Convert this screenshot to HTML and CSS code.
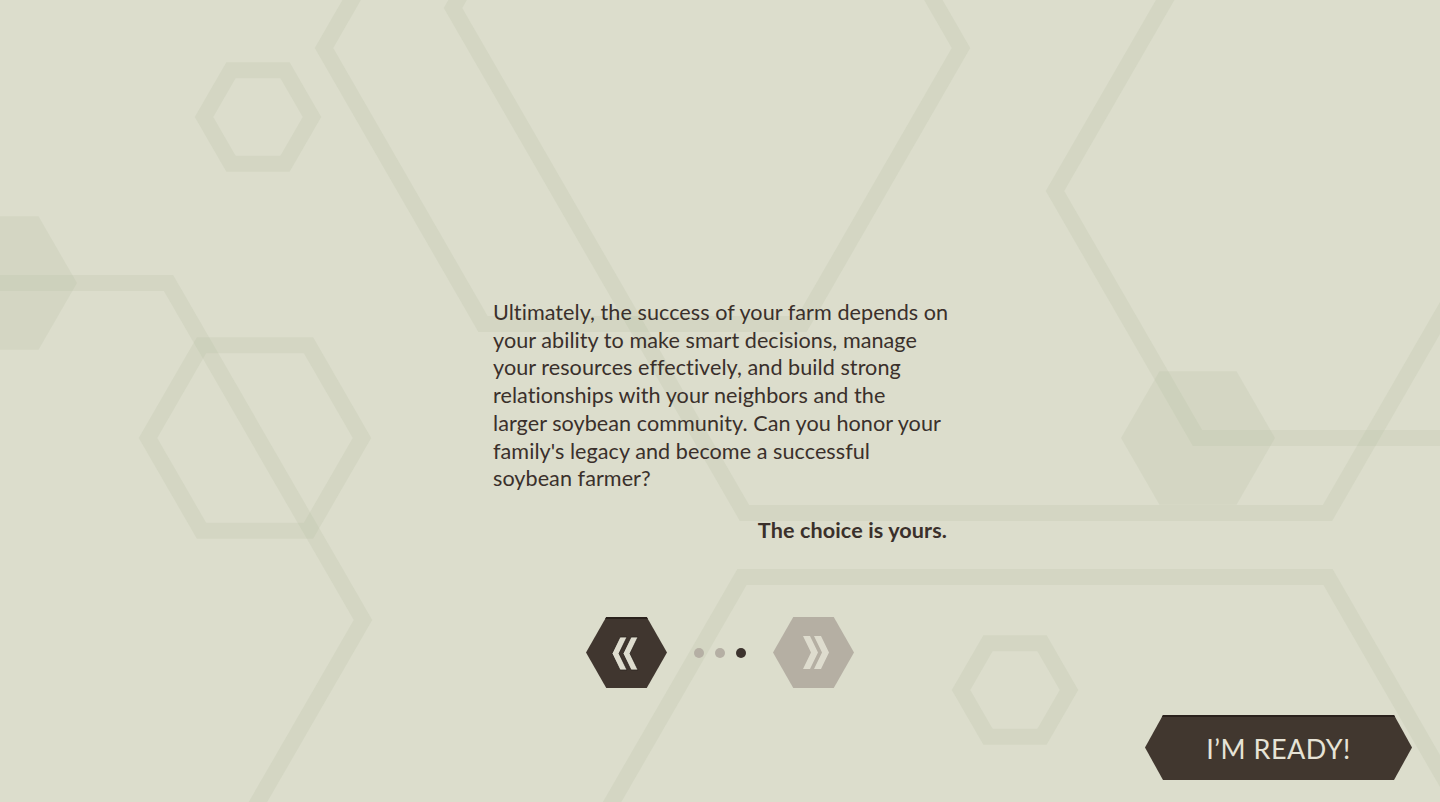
FILE: index.html
```html
<!DOCTYPE html>
<html lang="en">
<head>
<meta charset="utf-8">
<title>Intro</title>
<link rel="stylesheet" href="styles.css">
</head>
<body>
<svg class="backdrop" width="1440" height="802" viewBox="0 0 1440 802" aria-hidden="true">
  <g class="hex-line">
    <polygon points="204,117 231,70.2 285,70.2 312,117 285,163.8 231,163.8"/>
    <polygon points="-415,620 -220.5,283 168.5,283 363,620 168.5,957 -220.5,957"/>
    <polygon points="148,438 201.5,345.3 308.5,345.3 362,438 308.5,530.7 201.5,530.7"/>
    <polygon points="324,48 483,-228 802,-228 961,48 802,324 483,324"/>
    <polygon points="453,8 744.5,-497 1327.5,-497 1619,8 1327.5,513 744.5,513"/>
    <polygon points="449,1084.5 742,577 1328,577 1621,1084.5 1328,1592 742,1592"/>
    <polygon points="961,690 988,643.2 1042,643.2 1069,690 1042,736.8 988,736.8"/>
    <polygon points="1055,191 1197.5,-56 1482.5,-56 1625,191 1482.5,438 1197.5,438"/>
  </g>
  <g class="hex-fill">
    <polygon points="-77,283 -38.5,216.3 38.5,216.3 77,283 38.5,349.7 -38.5,349.7"/>
    <polygon points="1121,438 1159.5,371.3 1236.5,371.3 1275,438 1236.5,504.7 1159.5,504.7"/>
  </g>
</svg>

<main class="page">
  <section class="story">
    <p class="story-text">Ultimately, the success of your farm depends on<br>
    your ability to make smart decisions, manage<br>
    your resources effectively, and build strong<br>
    relationships with your neighbors and the<br>
    larger soybean community. Can you honor your<br>
    family's legacy and become a successful<br>
    soybean farmer?</p>
    <p class="story-kicker">The choice is yours.</p>
  </section>

  <nav class="pager" aria-label="Pages">
    <button class="hex-btn hex-btn--active" type="button" aria-label="Previous">
      <svg class="chevrons" width="28" height="35" viewBox="0 0 28 35">
        <path d="M9 1H16L8 17.5L16 34H9L1 17.5Z"/>
        <path d="M20 1H27L19 17.5L27 34H20L12 17.5Z"/>
      </svg>
    </button>
    <div class="dots">
      <span class="dot"></span>
      <span class="dot"></span>
      <span class="dot dot--current"></span>
    </div>
    <button class="hex-btn hex-btn--muted" type="button" aria-label="Next">
      <svg class="chevrons" width="28" height="35" viewBox="0 0 28 35">
        <path d="M1 1H8L16 17.5L8 34H1L9 17.5Z"/>
        <path d="M12 1H19L27 17.5L19 34H12L20 17.5Z"/>
      </svg>
    </button>
  </nav>

  <div class="actions">
    <button class="ready" type="button">I’M READY!</button>
  </div>
</main>
</body>
</html>
```

FILE: styles.css
```css
* { box-sizing: border-box; }

html, body {
  margin: 0;
  padding: 0;
}

body {
  width: 1440px;
  height: 802px;
  overflow: hidden;
  background: #dcddcc;
  position: relative;
  font-family: "Lato", "Noto Sans", sans-serif;
  color: #3a302b;
}

.backdrop {
  position: absolute;
  left: 0;
  top: 0;
}

.hex-line polygon {
  fill: none;
  stroke: rgba(180, 192, 160, 0.2);
  stroke-width: 16;
}

.hex-fill polygon {
  fill: rgba(180, 192, 160, 0.2);
}

.page {
  position: relative;
  height: 802px;
  display: flex;
  flex-direction: column;
  align-items: center;
}

.story {
  width: 454px;
  margin-top: 299px;
}

.story-text {
  margin: 0;
  font-size: 21.6px;
  line-height: 27.7px;
  letter-spacing: 0.05px;
  white-space: nowrap;
}

.story-kicker {
  margin: 23px 0 0;
  text-align: right;
  font-size: 21.6px;
  line-height: 28px;
  letter-spacing: 0.1px;
  font-weight: 700;
}

.pager {
  margin-top: 73px;
  display: flex;
  align-items: center;
  gap: 27px;
}

.hex-btn {
  width: 81px;
  height: 71px;
  border: 0;
  padding: 0;
  display: flex;
  align-items: center;
  justify-content: center;
  clip-path: polygon(25% 0, 75% 0, 100% 50%, 75% 100%, 25% 100%, 0 50%);
  cursor: pointer;
}

.hex-btn--active {
  background: #40362f;
  border-top: 2px solid #2a211c;
}

.hex-btn--active .chevrons {
  margin-right: 4px;
}

.hex-btn--muted {
  background: #b5afa3;
}

.hex-btn--muted .chevrons {
  margin-left: 4px;
}

.chevrons path {
  fill: #dedcce;
}

.hex-btn--active .chevrons path {
  stroke: #2c241f;
  stroke-width: 0.8;
}

.dots {
  display: flex;
  gap: 11px;
  margin-top: 1px;
}

.dot {
  width: 10px;
  height: 10px;
  border-radius: 50%;
  background: #b5afa4;
}

.dot--current {
  background: #3d332e;
}

.actions {
  align-self: stretch;
  margin-top: auto;
  display: flex;
  justify-content: flex-end;
  padding: 0 28px 22px 0;
}

.ready {
  width: 267px;
  height: 65px;
  border: 0;
  border-top: 2px solid #2a211c;
  padding: 0;
  background: #41372f;
  color: #e6e3d6;
  font-family: "Lato", "Noto Sans", sans-serif;
  font-size: 27px;
  font-weight: 400;
  letter-spacing: 0.5px;
  clip-path: polygon(18px 0, calc(100% - 18px) 0, 100% 50%, calc(100% - 18px) 100%, 18px 100%, 0 50%);
  cursor: pointer;
}
```
